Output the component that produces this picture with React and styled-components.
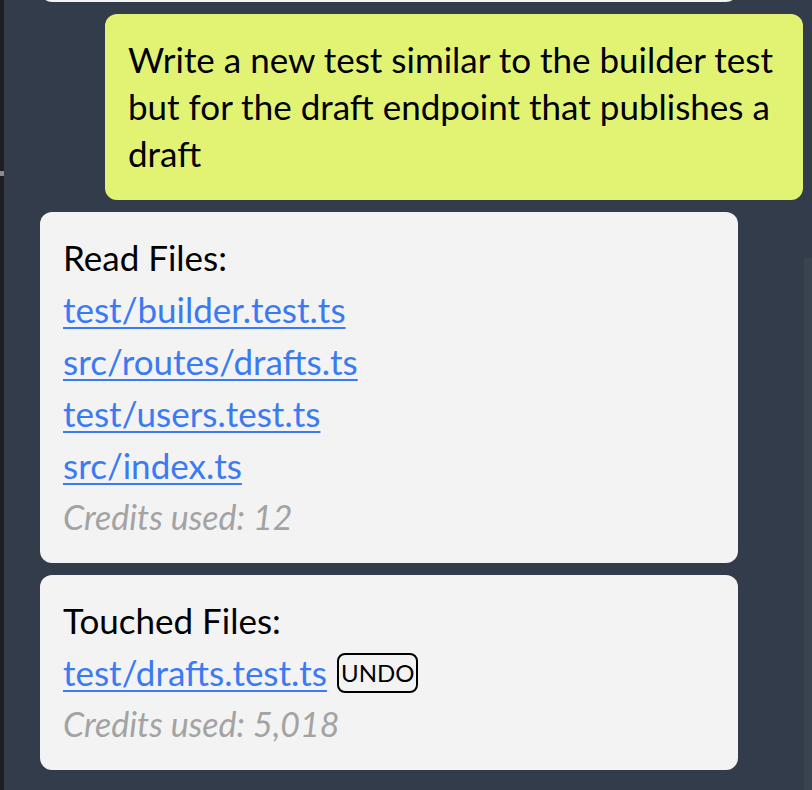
import React from 'react'
import styled, { createGlobalStyle } from 'styled-components'

const GlobalStyle = createGlobalStyle`
  html, body {
    margin: 0;
    padding: 0;
    background: #323c4a;
  }
`

const Screen = styled.div`
  display: flex;
  width: 812px;
  height: 790px;
  overflow: hidden;
  background: #323c4a;
  font-family: 'Lato', 'Noto Sans', sans-serif;
`

const Gutter = styled.div`
  width: 4px;
  flex-shrink: 0;
  background: #1e1f21;
  display: flex;
  flex-direction: column;
`

const GutterMark = styled.div`
  margin-top: 171px;
  height: 5px;
  background: #8a8a8a;
`

const Feed = styled.div`
  flex: 1;
  display: flex;
  flex-direction: column;
  justify-content: flex-end;
  gap: 12px;
  padding: 0 1px 20px 36px;
  overflow: hidden;
`

const Scrollbar = styled.div`
  width: 8px;
  flex-shrink: 0;
  display: flex;
  flex-direction: column;
`

const Thumb = styled.div`
  margin-top: 258px;
  flex: 1;
  background: #3a4451;
`

const Bubble = styled.div`
  width: 698px;
  box-sizing: border-box;
  flex-shrink: 0;
  min-height: ${p => p.$height || 0}px;
  align-self: ${p => (p.$user ? 'flex-end' : 'flex-start')};
  background: ${p => (p.$user ? '#e2f374' : '#f3f3f3')};
  border-radius: 12px;
  padding: ${p => (p.$user ? '22px 23px 23px' : '21px 23px 20px')};
  color: #000;
  font-size: 35px;
  line-height: 47px;
`

const Heading = styled.div`
  line-height: 52px;
  margin-top: -2px;
`

const FileRow = styled.div`
  display: flex;
  align-items: center;
  gap: 10px;
  line-height: 52px;
`

const FileLink = styled.a`
  color: #3a7af3;
  text-decoration: underline;
  text-decoration-thickness: 2px;
  text-underline-offset: 4px;
  cursor: pointer;
`

const UndoButton = styled.button`
  font-family: inherit;
  font-size: 24px;
  line-height: 36px;
  color: #000;
  background: transparent;
  border: 2px solid #000;
  border-radius: 8px;
  padding: 0 2px;
  margin-top: 1px;
`

const Credits = styled.div`
  color: #a3a3a3;
  font-style: italic;
  font-size: 34px;
  line-height: 52px;
`

const readFiles = [
  'test/builder.test.ts',
  'src/routes/drafts.ts',
  'test/users.test.ts',
  'src/index.ts',
]

export default function App() {
  return (
    <Screen>
      <GlobalStyle />
      <Gutter>
        <GutterMark />
      </Gutter>
      <Feed>
        <Bubble $height={120} />
        <Bubble $user>
          Write a new test similar to the builder test but for the draft endpoint that publishes a draft
        </Bubble>
        <Bubble>
          <Heading>Read Files:</Heading>
          {readFiles.map(f => (
            <FileRow key={f}>
              <FileLink>{f}</FileLink>
            </FileRow>
          ))}
          <Credits>Credits used: 12</Credits>
        </Bubble>
        <Bubble>
          <Heading>Touched Files:</Heading>
          <FileRow>
            <FileLink>test/drafts.test.ts</FileLink>
            <UndoButton>UNDO</UndoButton>
          </FileRow>
          <Credits>Credits used: 5,018</Credits>
        </Bubble>
      </Feed>
      <Scrollbar>
        <Thumb />
      </Scrollbar>
    </Screen>
  )
}
